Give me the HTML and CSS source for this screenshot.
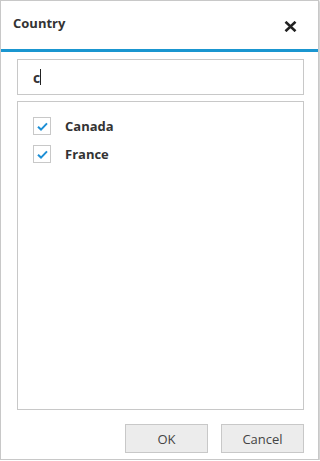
FILE: index.html
```html
<!DOCTYPE html>
<html lang="en">
<head>
<meta charset="UTF-8">
<title>Country</title>
<link rel="stylesheet" href="styles.css">
</head>
<body>
<div class="dialog">
    <div class="header">
        <div class="title">Country</div>
        <div class="close">
            <svg width="13" height="11" viewBox="0 0 13 11"><path d="M1.5 0.8 L11.5 10.2 M11.5 0.8 L1.5 10.2" stroke="#222" stroke-width="2.6" fill="none"/></svg>
        </div>
    </div>
    <div class="content">
        <div class="search"><span class="typed">c</span><span class="caret"></span></div>
        <div class="list">
            <div class="item">
                <span class="check"><svg width="11" height="9" viewBox="0 0 11 9"><path d="M1 4.8 L4 7.6 L10 1.4" stroke="#1d8fd6" stroke-width="2" fill="none"/></svg></span>
                <span class="label">Canada</span>
            </div>
            <div class="item">
                <span class="check"><svg width="11" height="9" viewBox="0 0 11 9"><path d="M1 4.8 L4 7.6 L10 1.4" stroke="#1d8fd6" stroke-width="2" fill="none"/></svg></span>
                <span class="label">France</span>
            </div>
        </div>
        <div class="buttons">
            <button class="btn">OK</button>
            <button class="btn">Cancel</button>
        </div>
    </div>
</div>
</body>
</html>
```

FILE: styles.css
```css
body, html {
    margin:0; padding:0;
    background:#fff;
    font-family:"Segoe UI","Open Sans",sans-serif;
    color:#333;
}
.dialog {
    width:317px; height:458px;
    border:1px solid #c8c8c8;
    box-shadow:1px 1px 2px rgba(0,0,0,0.25);
    display:flex; flex-direction:column;
}
.header {
    flex-shrink:0;
    height:48px;
    border-bottom:3px solid #1a96d0;
    display:flex; justify-content:space-between; align-items:center;
    padding:0 21px 0 12px;
}
.title {
    font-size:13px; font-weight:700; color:#333;
    margin-top:-4px;
}
.close {
    display:flex; margin-top:2px;
}
.content {
    flex:1;
    display:flex; flex-direction:column;
    padding:7px 14px 6px 16px;
}
.search {
    flex-shrink:0;
    box-sizing:border-box;
    height:36px;
    border:1px solid #c8c8c8;
    display:flex; align-items:center;
    padding-left:15px;
    font-size:14px;
}
.typed {
    font-weight:700; color:#333;
}
.caret {
    width:1px; height:16px; background:#222;
}
.list {
    flex-shrink:0;
    box-sizing:border-box;
    margin-top:6px;
    height:309px;
    border:1px solid #c8c8c8;
    padding-top:10px;
}
.item {
    display:flex; align-items:center;
    height:28px;
    padding-left:15px;
}
.check {
    width:16px; height:16px;
    border:1px solid #c8c8c8;
    display:flex; justify-content:center; align-items:center;
}
.label {
    margin-left:14px;
    font-size:13px; font-weight:700; color:#333;
}
.buttons {
    flex-shrink:0;
    display:flex; justify-content:flex-end; gap:13px;
    margin-top:14px;
}
.btn {
    width:83px; height:29px;
    background:#ececec;
    border:1px solid #c8c8c8;
    font-family:"Segoe UI","Open Sans",sans-serif;
    font-size:13px; color:#444;
    padding:0;
}
```
